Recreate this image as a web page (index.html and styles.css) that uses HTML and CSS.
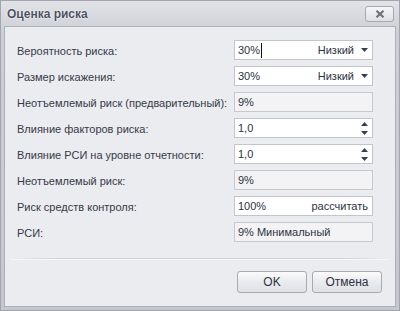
FILE: index.html
```html
<!DOCTYPE html>
<html lang="ru">
<head>
<meta charset="utf-8">
<title>Оценка риска</title>
<link rel="stylesheet" href="styles.css">
</head>
<body>
<div class="window">
  <div class="titlebar">
    <span class="title">Оценка риска</span>
    <button class="close" type="button" aria-label="Закрыть">
      <svg width="10" height="8" viewBox="0 0 10 8"><path d="M1.5 0.8 L8.5 7.2 M8.5 0.8 L1.5 7.2" stroke="#6f717a" stroke-width="2.2" fill="none"/></svg>
    </button>
  </div>
  <div class="content">
    <div class="form">
      <label class="lbl">Вероятность риска:</label>
      <div class="field edit"><span class="val">30%<span class="caret"></span></span><span class="right">Низкий</span><span class="drop"><svg width="7" height="4" viewBox="0 0 7 4"><path d="M0 0 H7 L3.5 4 Z" fill="#3a3f4d"/></svg></span></div>

      <label class="lbl">Размер искажения:</label>
      <div class="field edit"><span class="val">30%</span><span class="right">Низкий</span><span class="drop"><svg width="7" height="4" viewBox="0 0 7 4"><path d="M0 0 H7 L3.5 4 Z" fill="#3a3f4d"/></svg></span></div>

      <label class="lbl">Неотъемлемый риск (предварительный):</label>
      <div class="field ro"><span class="val">9%</span></div>

      <label class="lbl">Влияние факторов риска:</label>
      <div class="field edit"><span class="val">1,0</span><span class="spin"><svg width="7" height="13" viewBox="0 0 7 13"><path d="M3.5 0 L7 4 H0 Z M0 9 H7 L3.5 13 Z" fill="#3a3f4d"/></svg></span></div>

      <label class="lbl">Влияние РСИ на уровне отчетности:</label>
      <div class="field edit"><span class="val">1,0</span><span class="spin"><svg width="7" height="13" viewBox="0 0 7 13"><path d="M3.5 0 L7 4 H0 Z M0 9 H7 L3.5 13 Z" fill="#3a3f4d"/></svg></span></div>

      <label class="lbl">Неотъемлемый риск:</label>
      <div class="field ro"><span class="val">9%</span></div>

      <label class="lbl">Риск средств контроля:</label>
      <div class="field edit"><span class="val">100%</span><span class="right">рассчитать</span></div>

      <label class="lbl">РСИ:</label>
      <div class="field ro"><span class="val">9% Минимальный</span></div>
    </div>
    <div class="sep"></div>
    <div class="buttons">
      <button class="btn" type="button">OK</button>
      <button class="btn" type="button">Отмена</button>
    </div>
  </div>
</div>
</body>
</html>
```

FILE: styles.css
```css
html, body {
  margin: 0;
  padding: 0;
  background: #c5c6cd;
}
.window {
  width: 400px;
  height: 311px;
  box-sizing: border-box;
  border: 1px solid #a3a5ae;
  background: linear-gradient(#e2e3e7, #cfd0d6 30px, #c6c7ce);
  padding: 0 3px 3px 3px;
  display: flex;
  flex-direction: column;
  font-family: "Liberation Sans", Arial, sans-serif;
}
.titlebar {
  height: 25px;
  flex: none;
  display: flex;
  align-items: center;
  justify-content: space-between;
  padding-left: 3px;
}
.title {
  font-size: 12px;
  font-weight: bold;
  color: #4a5163;
  text-shadow: 0 0 2px #ffffff, 0 0 1px #ffffff;
  margin-top: 1px;
}
.close {
  width: 29px;
  height: 16px;
  margin-top: 1px;
  margin-right: 2px;
  padding: 0;
  border: 1px solid #a7a9b2;
  border-radius: 3px;
  background: linear-gradient(#f6f6f8, #dedfe4);
  display: flex;
  align-items: center;
  justify-content: center;
}
.content {
  flex: 1;
  border: 1px solid #aeb0b8;
  background: #ebecf0;
  padding: 13px 22px 0 12px;
  display: flex;
  flex-direction: column;
}
.form {
  display: grid;
  grid-template-columns: minmax(0, 1fr) 139px;
  grid-auto-rows: 20px;
  row-gap: 6px;
}
.lbl {
  font-size: 11px;
  color: #353a48;
  align-self: center;
  padding-top: 2px;
  white-space: nowrap;
}
.field {
  box-sizing: border-box;
  height: 20px;
  border: 1px solid #c4c5cb;
  display: flex;
  align-items: center;
  padding: 0 4px 0 3px;
  font-size: 11px;
  color: #2e3341;
}
.edit {
  background: #ffffff;
}
.ro {
  background: #f3f3f5;
  border-color: #c8c9ce;
}
.val {
  flex: 1;
  display: flex;
  align-items: center;
  white-space: nowrap;
}
.caret {
  width: 1px;
  height: 15px;
  background: #111;
  margin-left: 1px;
}
.right {
  white-space: nowrap;
}
.drop {
  display: flex;
  width: 7px;
  margin-left: 7px;
}
.spin {
  display: flex;
  width: 7px;
}
.sep {
  height: 1px;
  margin: 16px -16px 0 -6px;
  background: linear-gradient(90deg, rgba(200,202,210,0), #cfd1d7 12%, #cfd1d7 88%, rgba(200,202,210,0));
  box-shadow: 0 1px 0 #f7f7f9;
}
.buttons {
  display: flex;
  justify-content: flex-end;
  gap: 5px;
  margin-top: 12px;
  margin-right: -9px;
}
.btn {
  width: 70px;
  height: 22px;
  padding: 0;
  border: 1px solid #a8aab2;
  border-radius: 3px;
  background: linear-gradient(#fbfbfc, #eaebee 50%, #e0e1e5);
  font-family: "Liberation Sans", Arial, sans-serif;
  font-size: 12px;
  color: #2e3341;
}
```
